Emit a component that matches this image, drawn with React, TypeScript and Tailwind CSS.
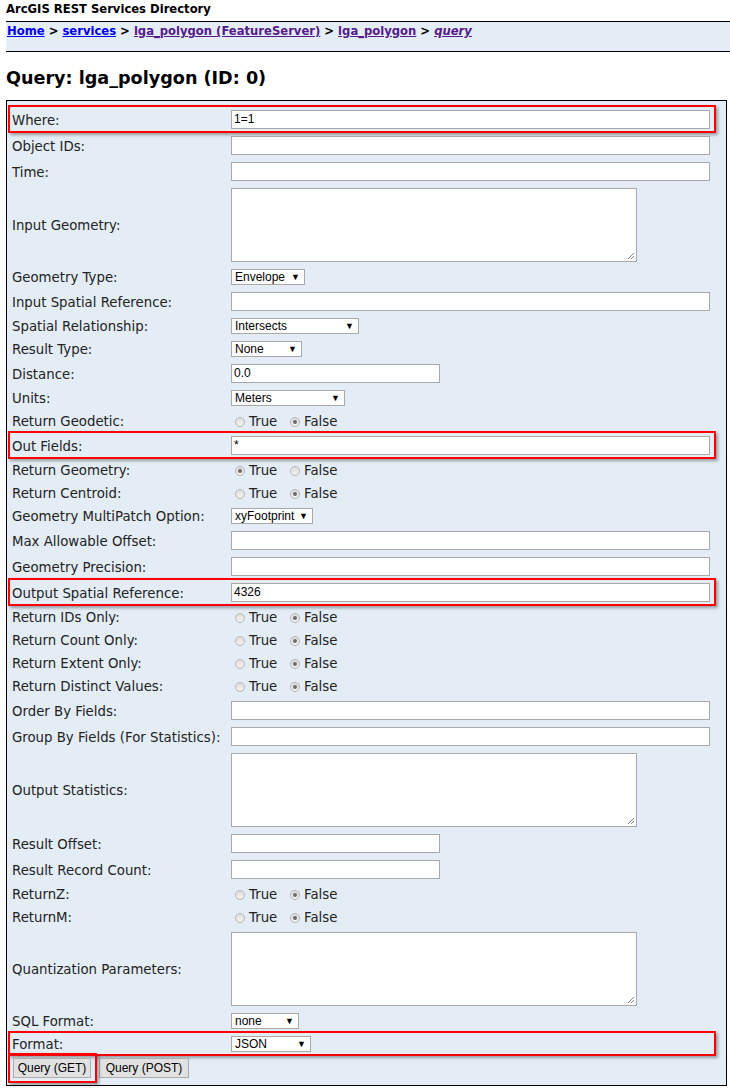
import React from "react";

const LABEL = "font-['DejaVu_Sans',Verdana,sans-serif]";
const ARIAL = "font-['Liberation_Sans',Arial,sans-serif]";

function Highlight({ className }: { className: string }) {
  return (
    <div
      className={
        "pointer-events-none absolute border-2 border-[#f00] shadow-[2px_2px_3px_rgba(0,0,0,0.35)] " +
        className
      }
    />
  );
}

function Row({
  label,
  children,
  hl,
}: {
  label: string;
  children: React.ReactNode;
  hl?: boolean;
}) {
  return (
    <div className="relative flex items-center pt-[4px] pb-[3px]">
      <div className="w-[224px] shrink-0 translate-y-[1px] pl-[5px] text-[13.3px] leading-[16px] text-[#222]">
        {label}
      </div>
      <div className="flex items-center">{children}</div>
      {hl && <Highlight className="left-[1px] top-[-1px] bottom-[-1px] w-[708px]" />}
    </div>
  );
}

function TextInput({ value = "", w = "w-[479px]" }: { value?: string; w?: string }) {
  return (
    <div
      className={
        "h-[19px] border border-[#a9a9a9] bg-white pl-[2px] text-[12px] leading-[17px] text-black " +
        ARIAL +
        " " +
        w
      }
    >
      {value}
    </div>
  );
}

function Area() {
  return (
    <div className="relative h-[74px] w-[406px] border border-[#a9a9a9] bg-white">
      <svg className="absolute bottom-[1px] right-[1px]" width="8" height="8" viewBox="0 0 8 8">
        <line x1="1" y1="7" x2="7" y2="1" stroke="#888" strokeWidth="1" />
        <line x1="4" y1="7" x2="7" y2="4" stroke="#888" strokeWidth="1" />
      </svg>
    </div>
  );
}

function Select({ value, w }: { value: string; w: string }) {
  return (
    <div
      className={
        "flex h-[16px] items-center justify-between border border-[#a9a9a9] bg-white pl-[3px] pr-[4px] text-[12px] leading-[14px] text-black " +
        ARIAL +
        " " +
        w
      }
    >
      <span>{value}</span>
      <span className="text-[9px] leading-[10px]">▼</span>
    </div>
  );
}

function RadioDot({ checked }: { checked?: boolean }) {
  return (
    <span className="flex h-[10px] w-[10px] items-center justify-center rounded-full border border-[#b4b4b4] bg-gradient-to-b from-[#dcdcdc] to-[#f4f4f4]">
      {checked && <span className="h-[4px] w-[4px] rounded-full bg-[#6a6a6a]" />}
    </span>
  );
}

function Radios({ trueChecked }: { trueChecked?: boolean }) {
  return (
    <div className={"flex h-[16px] items-center pt-[1px] text-[13.3px] text-[#222] " + LABEL}>
      <span className="ml-[4px]">
        <RadioDot checked={trueChecked} />
      </span>
      <span className="ml-[4px] w-[27px]">True</span>
      <span className="ml-[14px]">
        <RadioDot checked={!trueChecked} />
      </span>
      <span className="ml-[4px]">False</span>
    </div>
  );
}

export default function App() {
  return (
    <div className={"h-[1092px] w-[730px] overflow-hidden bg-white text-black " + LABEL}>
      <div className="h-[21px] pl-[6px] pt-[1px] text-[11.6px] font-bold leading-[16px]">
        ArcGIS REST Services Directory
      </div>
      <div className="ml-[6px] h-[31px] border-y border-black bg-[#e4edf6] pl-[1px] pt-[1px] text-[11.6px] font-bold leading-[16px]">
        <a className="text-[#0000ee] underline">Home</a>
        <span> &gt; </span>
        <a className="text-[#0000ee] underline">services</a>
        <span> &gt; </span>
        <a className="text-[#551a8b] underline">lga_polygon (FeatureServer)</a>
        <span> &gt; </span>
        <a className="text-[#551a8b] underline">lga_polygon</a>
        <span> &gt; </span>
        <a className="italic text-[#551a8b] underline">query</a>
      </div>
      <div className="h-[15px]" />
      <div className="h-[33px] pl-[6px] text-[17.6px] font-bold leading-[22px]">
        Query: lga_polygon (ID: 0)
      </div>
      <div className="ml-[6px] mr-[3px] h-[986px] border border-black bg-[#e4edf6] pt-[5px]">
        <Row label="Where:" hl>
          <TextInput value="1=1" />
        </Row>
        <Row label="Object IDs:">
          <TextInput />
        </Row>
        <Row label="Time:">
          <TextInput />
        </Row>
        <Row label="Input Geometry:">
          <Area />
        </Row>
        <Row label="Geometry Type:">
          <Select value="Envelope" w="w-[74px]" />
        </Row>
        <Row label="Input Spatial Reference:">
          <TextInput />
        </Row>
        <Row label="Spatial Relationship:">
          <Select value="Intersects" w="w-[128px]" />
        </Row>
        <Row label="Result Type:">
          <Select value="None" w="w-[71px]" />
        </Row>
        <Row label="Distance:">
          <TextInput value="0.0" w="w-[209px]" />
        </Row>
        <Row label="Units:">
          <Select value="Meters" w="w-[114px]" />
        </Row>
        <Row label="Return Geodetic:">
          <Radios />
        </Row>
        <Row label="Out Fields:" hl>
          <TextInput value="*" />
        </Row>
        <Row label="Return Geometry:">
          <Radios trueChecked />
        </Row>
        <Row label="Return Centroid:">
          <Radios />
        </Row>
        <Row label="Geometry MultiPatch Option:">
          <Select value="xyFootprint" w="w-[82px]" />
        </Row>
        <Row label="Max Allowable Offset:">
          <TextInput />
        </Row>
        <Row label="Geometry Precision:">
          <TextInput />
        </Row>
        <Row label="Output Spatial Reference:" hl>
          <TextInput value="4326" />
        </Row>
        <Row label="Return IDs Only:">
          <Radios />
        </Row>
        <Row label="Return Count Only:">
          <Radios />
        </Row>
        <Row label="Return Extent Only:">
          <Radios />
        </Row>
        <Row label="Return Distinct Values:">
          <Radios />
        </Row>
        <Row label="Order By Fields:">
          <TextInput />
        </Row>
        <Row label="Group By Fields (For Statistics):">
          <TextInput />
        </Row>
        <Row label="Output Statistics:">
          <Area />
        </Row>
        <Row label="Result Offset:">
          <TextInput w="w-[209px]" />
        </Row>
        <Row label="Result Record Count:">
          <TextInput w="w-[209px]" />
        </Row>
        <Row label="ReturnZ:">
          <Radios />
        </Row>
        <Row label="ReturnM:">
          <Radios />
        </Row>
        <Row label="Quantization Parameters:">
          <Area />
        </Row>
        <Row label="SQL Format:">
          <Select value="none" w="w-[68px]" />
        </Row>
        <Row label="Format:" hl>
          <Select value="JSON" w="w-[80px]" />
        </Row>
        <div className="relative flex items-center gap-[8px] pl-[6px] pt-[3px]">
          <button
            className={
              "h-[20px] w-[78px] border border-[#adadad] bg-[#e1e1e1] text-[12px] leading-[18px] text-black " +
              ARIAL
            }
          >
            Query (GET)
          </button>
          <button
            className={
              "h-[20px] w-[90px] border border-[#adadad] bg-[#e1e1e1] text-[12px] leading-[18px] text-black " +
              ARIAL
            }
          >
            Query (POST)
          </button>
          <Highlight className="left-[1px] top-[-2px] h-[30px] w-[89px]" />
        </div>
      </div>
    </div>
  );
}
